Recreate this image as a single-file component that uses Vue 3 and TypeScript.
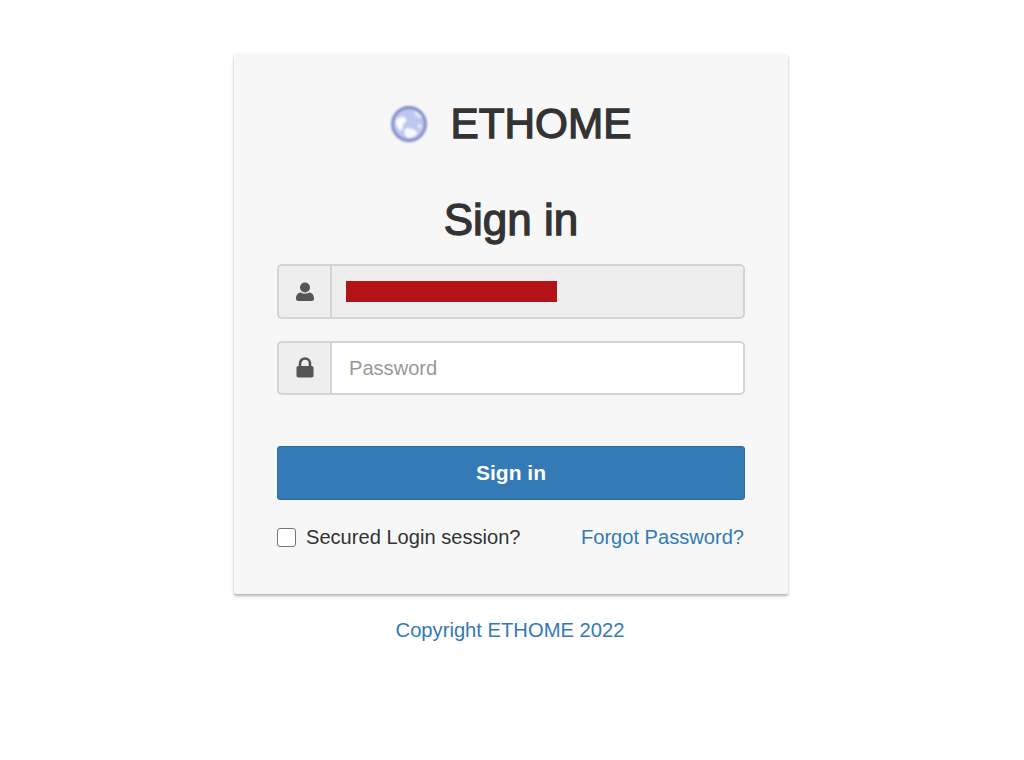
<script setup lang="ts">
const brand = "ETHOME";
</script>

<template>
  <div class="page">
    <main class="card">
      <div class="brand">
        <svg class="globe" width="38" height="38" viewBox="0 0 38 38" aria-hidden="true">
          <circle cx="19" cy="19" r="16.500" fill="#bcc6ee" stroke="#7f8bc9" stroke-width="2.800" />
          <path d="M6 15c2-3 5-4 8-3 2 1 3 3 2 5-1 1-3 1-3 3 0 3-1 5-2 6-3-2-6-6-5-11z" fill="#fbfcff" />
          <path d="M15 24c3-2 7-1 10 1 2 1 3 2 2 4-2 3-6 4-9 4-3-2-5-6-3-9z" fill="#f8f9fe" />
          <path d="M24 6c1 2 0 4 2 5 2 2 4 2 6 2-1-3-4-6-8-7z" fill="#e6eafa" />
          <path d="M28 19c2 0 3 1 4 2-1 2-2 3-3 3-1-2-2-3-1-5z" fill="#eef1fb" />
        </svg>
        <span class="brand-name">{{ brand }}</span>
      </div>

      <h1 class="title">Sign in</h1>

      <div class="field">
        <span class="addon">
          <svg width="18" height="22" viewBox="0 0 18 22" aria-hidden="true">
            <circle cx="9" cy="6.500" r="5" fill="#555" />
            <path d="M0 17.500c0-4 2.500-6 5-6 1 .8 2.500 1.200 4 1.200s3-.4 4-1.200c2.500 0 5 2 5 6 0 1.800-1 2.500-2.500 2.500h-13C1 20 0 19.300 0 17.500z" fill="#555" />
          </svg>
        </span>
        <div class="control filled"><span class="redaction"></span></div>
      </div>

      <div class="field second">
        <span class="addon">
          <svg width="18" height="22" viewBox="0 0 18 22" aria-hidden="true">
            <path d="M4 10V6.500a5 5 0 0 1 10 0V10" fill="none" stroke="#555" stroke-width="2.600" />
            <rect x="0.500" y="9" width="17" height="11.500" rx="1.800" fill="#555" />
          </svg>
        </span>
        <input class="control" type="password" placeholder="Password" />
      </div>

      <button class="submit" type="button">Sign in</button>

      <div class="options">
        <label class="remember">
          <span class="box"></span>
          <span>Secured Login session?</span>
        </label>
        <a class="link" href="#">Forgot Password?</a>
      </div>
    </main>

    <a class="link copyright" href="#">Copyright ETHOME 2022</a>
  </div>
</template>

<style>
html, body { background: #fff; }
</style>

<style scoped>
.page {
  width: 554px;
  margin-left: 234px;
  padding-top: 54px;
  font-family: "Liberation Sans", Arial, sans-serif;
  color: #333;
}
.card {
  box-sizing: border-box;
  height: 540px;
  padding: 0 43px;
  background: #f7f7f7;
  box-shadow: 0 2px 3px rgba(0, 0, 0, 0.3);
  border-radius: 2px;
  display: flex;
  flex-direction: column;
}
.brand {
  display: flex;
  align-items: center;
  justify-content: center;
  gap: 23px;
  margin-top: 46px;
  height: 48px;
  margin-left: -1px;
}
.globe { filter: blur(0.8px); flex: none; }
.brand-name {
  font-size: 42.300px;
  font-weight: 400;
  line-height: 48px;
  color: #333;
  -webkit-text-stroke: 1.300px #333;
}
.title {
  margin: 48px 0 0;
  height: 47px;
  font-size: 44px;
  line-height: 47px;
  font-weight: 400;
  text-align: center;
  color: #333;
  -webkit-text-stroke: 1.300px #333;
}
.field {
  display: flex;
  height: 55px;
  margin-top: 21px;
}
.second { margin-top: 22px; height: 54px; }
.addon {
  box-sizing: border-box;
  width: 53px;
  flex: none;
  display: flex;
  align-items: center;
  justify-content: center;
  background: #eee;
  border: 2px solid #d4d4d4;
  border-right: 0;
  border-radius: 5px 0 0 5px;
}
.control {
  box-sizing: border-box;
  flex: 1;
  min-width: 0;
  height: 100%;
  border: 2px solid #d4d4d4;
  border-radius: 0 5px 5px 0;
  background: #fff;
  padding: 0 17px;
  font: 20.100px "Liberation Sans", Arial, sans-serif;
  color: #555;
  outline: none;
}
.control::placeholder { color: #999; opacity: 1; }
.filled {
  background: #eee;
  display: flex;
  align-items: center;
  padding-left: 14px;
}
.redaction {
  display: block;
  width: 211px;
  height: 21px;
  background: #b31217;
}
.submit {
  height: 54px;
  margin-top: 51px;
  background: #337ab7;
  border: 1.500px solid #2e6da4;
  border-radius: 3px;
  color: #fff;
  font: 700 21px "Liberation Sans", Arial, sans-serif;
  padding: 0;
}
.options {
  display: flex;
  align-items: center;
  justify-content: space-between;
  margin-top: 25px;
  height: 24px;
  font-size: 20.100px;
  padding-right: 1px;
}
.remember {
  display: flex;
  align-items: center;
  gap: 10px;
  color: #333;
}
.box {
  box-sizing: border-box;
  width: 19px;
  height: 19px;
  background: #fff;
  border: 1.500px solid #767676;
  border-radius: 3px;
}
.link { color: #337ab7; text-decoration: none; }
.copyright {
  display: block;
  margin-top: 24px;
  padding-right: 2px;
  height: 24px;
  line-height: 24px;
  font-size: 20.200px;
  text-align: center;
}
</style>
